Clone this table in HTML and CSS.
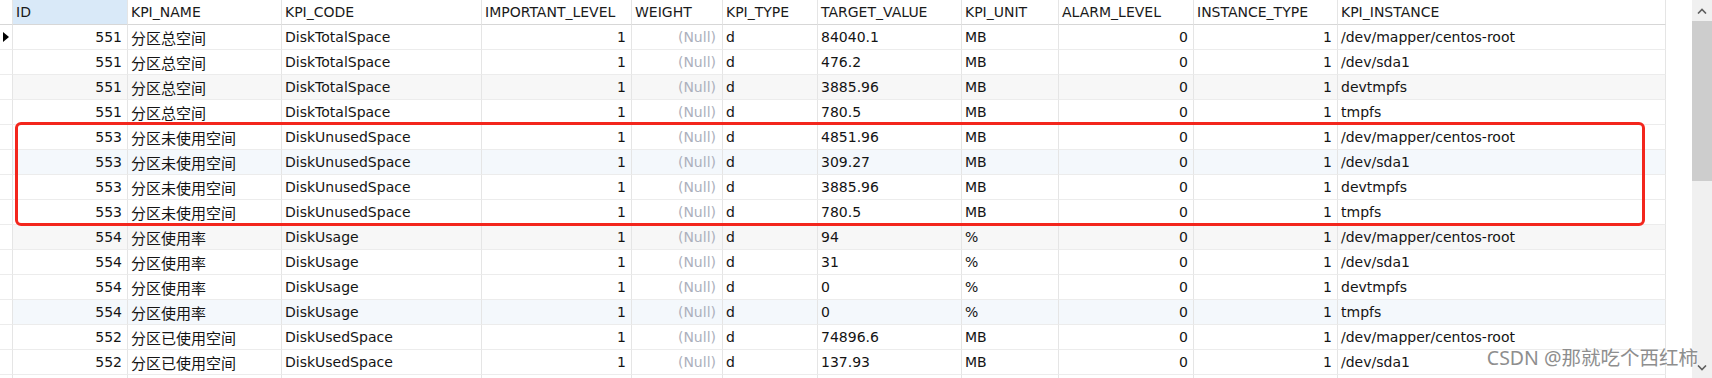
FILE: index.html
```html
<!DOCTYPE html>
<html lang="zh-CN">
<head>
    <meta charset="UTF-8">
    <title>KPI 数据</title>
    <link rel="stylesheet" href="styles.css">
</head>
<body>
<div class="grid-view">
    <div class="grid-area">
        <table class="data-grid">
            <thead>
            <tr>
                <th class="ind"></th>
                <th class="c-id sel">ID</th>
                <th class="c-name">KPI_NAME</th>
                <th class="c-code">KPI_CODE</th>
                <th class="c-imp">IMPORTANT_LEVEL</th>
                <th class="c-weight">WEIGHT</th>
                <th class="c-type">KPI_TYPE</th>
                <th class="c-target">TARGET_VALUE</th>
                <th class="c-unit">KPI_UNIT</th>
                <th class="c-alarm">ALARM_LEVEL</th>
                <th class="c-inst-type">INSTANCE_TYPE</th>
                <th class="c-inst">KPI_INSTANCE</th>
            </tr>
            </thead>
            <tbody>
            <tr>
                <td class="ind current"><span class="arrow"></span></td>
                <td class="num">551</td><td class="cn">分区总空间</td><td>DiskTotalSpace</td>
                <td class="num">1</td><td class="num null">(Null)</td><td>d</td><td>84040.1</td><td>MB</td>
                <td class="num">0</td><td class="num">1</td><td>/dev/mapper/centos-root</td>
            </tr>
            <tr>
                <td class="ind"></td>
                <td class="num">551</td><td class="cn">分区总空间</td><td>DiskTotalSpace</td>
                <td class="num">1</td><td class="num null">(Null)</td><td>d</td><td>476.2</td><td>MB</td>
                <td class="num">0</td><td class="num">1</td><td>/dev/sda1</td>
            </tr>
            <tr class="alt">
                <td class="ind"></td>
                <td class="num">551</td><td class="cn">分区总空间</td><td>DiskTotalSpace</td>
                <td class="num">1</td><td class="num null">(Null)</td><td>d</td><td>3885.96</td><td>MB</td>
                <td class="num">0</td><td class="num">1</td><td>devtmpfs</td>
            </tr>
            <tr>
                <td class="ind"></td>
                <td class="num">551</td><td class="cn">分区总空间</td><td>DiskTotalSpace</td>
                <td class="num">1</td><td class="num null">(Null)</td><td>d</td><td>780.5</td><td>MB</td>
                <td class="num">0</td><td class="num">1</td><td>tmpfs</td>
            </tr>
            <tr>
                <td class="ind"></td>
                <td class="num">553</td><td class="cn">分区未使用空间</td><td>DiskUnusedSpace</td>
                <td class="num">1</td><td class="num null">(Null)</td><td>d</td><td>4851.96</td><td>MB</td>
                <td class="num">0</td><td class="num">1</td><td>/dev/mapper/centos-root</td>
            </tr>
            <tr class="tint">
                <td class="ind"></td>
                <td class="num">553</td><td class="cn">分区未使用空间</td><td>DiskUnusedSpace</td>
                <td class="num">1</td><td class="num null">(Null)</td><td>d</td><td>309.27</td><td>MB</td>
                <td class="num">0</td><td class="num">1</td><td>/dev/sda1</td>
            </tr>
            <tr>
                <td class="ind"></td>
                <td class="num">553</td><td class="cn">分区未使用空间</td><td>DiskUnusedSpace</td>
                <td class="num">1</td><td class="num null">(Null)</td><td>d</td><td>3885.96</td><td>MB</td>
                <td class="num">0</td><td class="num">1</td><td>devtmpfs</td>
            </tr>
            <tr>
                <td class="ind"></td>
                <td class="num">553</td><td class="cn">分区未使用空间</td><td>DiskUnusedSpace</td>
                <td class="num">1</td><td class="num null">(Null)</td><td>d</td><td>780.5</td><td>MB</td>
                <td class="num">0</td><td class="num">1</td><td>tmpfs</td>
            </tr>
            <tr class="alt">
                <td class="ind"></td>
                <td class="num">554</td><td class="cn">分区使用率</td><td>DiskUsage</td>
                <td class="num">1</td><td class="num null">(Null)</td><td>d</td><td>94</td><td>%</td>
                <td class="num">0</td><td class="num">1</td><td>/dev/mapper/centos-root</td>
            </tr>
            <tr>
                <td class="ind"></td>
                <td class="num">554</td><td class="cn">分区使用率</td><td>DiskUsage</td>
                <td class="num">1</td><td class="num null">(Null)</td><td>d</td><td>31</td><td>%</td>
                <td class="num">0</td><td class="num">1</td><td>/dev/sda1</td>
            </tr>
            <tr>
                <td class="ind"></td>
                <td class="num">554</td><td class="cn">分区使用率</td><td>DiskUsage</td>
                <td class="num">1</td><td class="num null">(Null)</td><td>d</td><td>0</td><td>%</td>
                <td class="num">0</td><td class="num">1</td><td>devtmpfs</td>
            </tr>
            <tr class="tint">
                <td class="ind"></td>
                <td class="num">554</td><td class="cn">分区使用率</td><td>DiskUsage</td>
                <td class="num">1</td><td class="num null">(Null)</td><td>d</td><td>0</td><td>%</td>
                <td class="num">0</td><td class="num">1</td><td>tmpfs</td>
            </tr>
            <tr>
                <td class="ind"></td>
                <td class="num">552</td><td class="cn">分区已使用空间</td><td>DiskUsedSpace</td>
                <td class="num">1</td><td class="num null">(Null)</td><td>d</td><td>74896.6</td><td>MB</td>
                <td class="num">0</td><td class="num">1</td><td>/dev/mapper/centos-root</td>
            </tr>
            <tr>
                <td class="ind"></td>
                <td class="num">552</td><td class="cn">分区已使用空间</td><td>DiskUsedSpace</td>
                <td class="num">1</td><td class="num null">(Null)</td><td>d</td><td>137.93</td><td>MB</td>
                <td class="num">0</td><td class="num">1</td><td>/dev/sda1</td>
            </tr>
            <!-- next row, only its grid lines are visible -->
            <tr>
                <td class="ind"></td>
                <td></td><td></td><td></td><td></td><td></td><td></td>
                <td></td><td></td><td></td><td></td><td></td>
            </tr>
            </tbody>
        </table>
    </div>

    <!-- vertical scrollbar -->
    <div class="scrollbar">
        <div class="scroll-btn">
            <svg width="10" height="6" viewBox="0 0 10 6"><path d="M1 5.5 L5 1.5 L9 5.5" fill="none" stroke="#5f5f5f" stroke-width="1.6"/></svg>
        </div>
        <div class="scroll-thumb"></div>
        <div class="scroll-track"></div>
        <div class="scroll-btn">
            <svg width="10" height="6" viewBox="0 0 10 6"><path d="M1 0.5 L5 4.5 L9 0.5" fill="none" stroke="#5f5f5f" stroke-width="1.6"/></svg>
        </div>
    </div>

    <!-- red marker drawn over the 553 rows -->
    <div class="highlight"></div>

    <span class="watermark">CSDN @那就吃个西红柿</span>
</div>
</body>
</html>
```

FILE: styles.css
```css
* {
    margin: 0;
    padding: 0;
    box-sizing: border-box;
}

body {
    width: 1712px;
    height: 378px;
    overflow: hidden;
    background-color: #fff;
    font-family: "DejaVu Sans", "Noto Sans CJK SC", sans-serif;
    font-size: 14px;
    color: #141414;
}

.grid-view {
    position: relative;
    display: flex;
    height: 378px;
}

.grid-area {
    flex: 1;
    overflow: hidden;
}

/* Table */
.data-grid {
    table-layout: fixed;
    border-collapse: separate;
    border-spacing: 0;
    width: 1666px;
}

th, td {
    height: 25px;
    padding: 0 5px 0 3px;
    border-right: 1px solid #e5e5e5;
    border-bottom: 1px solid #ececec;
    white-space: nowrap;
    overflow: hidden;
    text-align: left;
    vertical-align: middle;
    font-weight: normal;
}

th {
    border-bottom-color: #d7d7d7;
    color: #1a1a1a;
}

th.sel {
    background-color: #d9e9f8;
}

.ind { width: 13px; padding: 0; }
.c-id { width: 115px; }
.c-name { width: 154px; }
.c-code { width: 200px; }
.c-imp { width: 150px; }
.c-weight { width: 91px; }
.c-type { width: 95px; }
.c-target { width: 144px; }
.c-unit { width: 97px; }
.c-alarm { width: 135px; }
.c-inst-type { width: 144px; }
.c-inst { width: 328px; }

td.cn {
    font-family: "Noto Sans CJK SC", sans-serif;
    font-size: 15px;
}

td.num {
    text-align: right;
    padding-right: 5px;
}

td.null {
    color: #acb0bc;
    padding-right: 6px;
}

tr.alt td {
    background-color: #f7f7f7;
}

tr.tint td {
    background-color: #f4f8fc;
}

tr td.ind {
    background-color: #fff;
}

.arrow {
    display: block;
    width: 0;
    height: 0;
    margin-left: 3px;
    border-top: 5px solid transparent;
    border-bottom: 5px solid transparent;
    border-left: 6px solid #000;
}

/* Scrollbar */
.scrollbar {
    width: 20px;
    background-color: #f0f0f0;
    display: flex;
    flex-direction: column;
    margin-left: 26px;
}

.scroll-btn {
    height: 21px;
    display: flex;
    align-items: center;
    justify-content: center;
}

.scroll-thumb {
    height: 160px;
    background-color: #cdcdcd;
}

.scroll-track {
    flex: 1;
}

/* Overlays */
.highlight {
    position: absolute;
    left: 15px;
    top: 122px;
    width: 1630px;
    height: 104px;
    border: 3px solid #f3261d;
    border-radius: 6px;
    pointer-events: none;
}

.watermark {
    position: absolute;
    right: 14px;
    bottom: 7px;
    font-family: "Noto Sans", "Noto Sans CJK SC", sans-serif;
    font-size: 19.5px;
    color: #8e8e8e;
    text-shadow: 0 0 2px #fff, 0 0 2px #fff;
}
```
